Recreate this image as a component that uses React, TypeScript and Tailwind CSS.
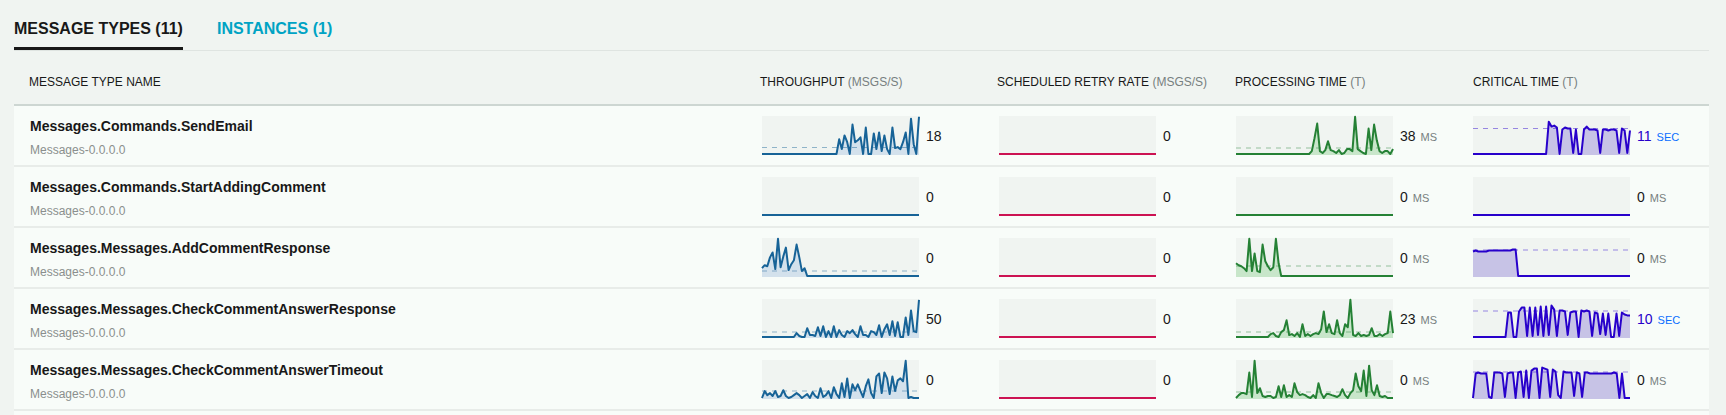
const flat = (n: number) => Array.from({ length: n }, () => 0)

interface Metric {
  data: number[]
  avg?: number
  value: string
  unit?: string
  sec?: boolean
}

interface Row {
  name: string
  throughput: Metric
  processing: Metric
  critical: Metric
}

const rows: Row[] = [
  {
    name: 'Messages.Commands.SendEmail',
    throughput: {
      value: '18',
      avg: 6.5,
      data: [...flat(28), 0, 15, 5, 19, 12, 0, 30, 12, 14, 17, 0, 27, 0, 0, 21, 5, 22, 3, 19, 5, 0, 27, 6, 7, 5, 12, 22, 0, 36, 10, 0, 38],
    },
    processing: {
      value: '38',
      unit: 'MS',
      avg: 6,
      data: [...flat(28), 3, 16, 31, 3, 1, 4, 13, 4, 3, 1, 4, 0, 1, 5, 5, 3, 38, 5, 3, 1, 0, 26, 4, 30, 14, 3, 1, 3, 3, 0, 5],
    },
    critical: {
      value: '11',
      unit: 'SEC',
      sec: true,
      avg: 25.5,
      data: [...flat(28), 33, 28, 29, 27, 0, 25, 27, 26, 26, 1, 25, 0, 0, 25, 28, 25, 25, 25, 24, 1, 25, 25, 24, 25, 25, 24, 1, 26, 24, 1, 24],
    },
  },
  {
    name: 'Messages.Commands.StartAddingComment',
    throughput: { value: '0', data: flat(2) },
    processing: { value: '0', unit: 'MS', data: flat(2) },
    critical: { value: '0', unit: 'MS', data: flat(2) },
  },
  {
    name: 'Messages.Messages.AddCommentResponse',
    throughput: {
      value: '0',
      avg: 5,
      data: [8, 11, 10, 19, 24, 7, 38, 9, 20, 29, 6, 12, 16, 32, 19, 5, 8, 0, ...flat(42)],
    },
    processing: {
      value: '0',
      unit: 'MS',
      avg: 10,
      data: [13, 11, 10, 8, 5, 38, 5, 23, 5, 4, 32, 15, 10, 6, 9, 38, 13, 0, ...flat(42)],
    },
    critical: {
      value: '0',
      unit: 'MS',
      avg: 26,
      data: [25, 26, 25, 25, 25, 25, 26, 26, 26, 26, 26, 26, 26, 26, 26, 27, 27, 0, ...flat(42)],
    },
  },
  {
    name: 'Messages.Messages.CheckCommentAnswerResponse',
    throughput: {
      value: '50',
      avg: 5,
      data: [...flat(13), 4, 1, 0, 0, 9, 2, 2, 1, 10, 1, 11, 0, 6, 0, 11, 0, 7, 2, 0, 6, 4, 7, 3, 0, 11, 2, 2, 0, 6, 5, 2, 12, 0, 8, 13, 2, 16, 1, 15, 0, 0, 20, 2, 27, 6, 5, 38],
    },
    processing: {
      value: '23',
      unit: 'MS',
      avg: 5,
      data: [...flat(13), 3, 4, 1, 0, 5, 7, 17, 2, 3, 1, 4, 0, 13, 1, 3, 1, 3, 4, 3, 8, 26, 5, 13, 4, 3, 17, 4, 1, 13, 10, 38, 2, 1, 4, 1, 2, 1, 2, 9, 1, 1, 3, 1, 3, 4, 26, 4],
    },
    critical: {
      value: '10',
      unit: 'SEC',
      sec: true,
      avg: 26,
      data: [...flat(13), 25, 25, 0, 0, 26, 30, 30, 1, 30, 1, 30, 2, 31, 1, 31, 2, 32, 28, 1, 27, 27, 26, 2, 25, 26, 26, 0, 27, 26, 27, 26, 1, 25, 24, 3, 24, 2, 24, 0, 0, 24, 1, 25, 23, 22, 22],
    },
  },
  {
    name: 'Messages.Messages.CheckCommentAnswerTimeout',
    throughput: {
      value: '0',
      avg: 7,
      data: [0, 7, 3, 5, 2, 7, 1, 2, 8, 2, 0, 1, 3, 5, 3, 0, 2, 4, 0, 6, 2, 0, 10, 1, 3, 7, 0, 11, 4, 0, 15, 1, 20, 0, 14, 8, 14, 7, 1, 12, 19, 5, 0, 22, 25, 5, 26, 20, 4, 22, 7, 18, 20, 17, 38, 0, 1, 0, 0, 0],
    },
    processing: {
      value: '0',
      unit: 'MS',
      avg: 6,
      data: [0, 3, 5, 5, 4, 26, 1, 38, 5, 10, 2, 1, 2, 2, 0, 1, 12, 1, 13, 1, 3, 1, 15, 6, 3, 4, 3, 1, 0, 3, 0, 15, 5, 0, 4, 4, 3, 2, 1, 3, 9, 3, 0, 5, 8, 25, 12, 7, 28, 2, 33, 8, 3, 13, 2, 1, 2, 0, 0, 0],
    },
    critical: {
      value: '0',
      unit: 'MS',
      avg: 26,
      data: [0, 25, 26, 25, 25, 25, 1, 0, 26, 26, 26, 25, 1, 25, 26, 26, 0, 26, 27, 1, 28, 0, 28, 30, 30, 0, 31, 30, 29, 1, 29, 27, 3, 0, 27, 26, 26, 26, 2, 26, 25, 1, 26, 26, 25, 25, 25, 25, 25, 25, 25, 25, 25, 26, 25, 0, 25, 0, 0, 0],
    },
  },
]

// width and height of the plot, same for all four columns
const W = 157
const H = 39

const chartColors = {
  throughput: { line: '#176397', area: '#d3e1ec' },
  retry: { line: '#cc1252', area: '#f5d0dc' },
  processing: { line: '#258135', area: '#c8e6ca' },
  critical: { line: '#2700cb', area: '#c7c3e6' },
}

type ChartColor = { line: string; area: string }

function Sparkline({ data, color, avg }: { data: number[]; color: ChartColor; avg?: number }) {
  const pts = data.map((h, i) => `${((i * W) / (data.length - 1)).toFixed(1)},${(38 - h * 0.98).toFixed(1)}`)
  return (
    <svg width={W} height={H} className="block shrink-0 overflow-visible bg-[#f0f4f1]">
      {avg !== undefined && <polygon points={`0,${H} ${pts.join(' ')} ${W},${H}`} fill={color.area} />}
      {avg !== undefined && (
        <line x1={0} x2={W} y1={38 - avg} y2={38 - avg} stroke={color.line} strokeOpacity={0.45} strokeWidth={1} strokeDasharray="5 5" />
      )}
      <polyline points={pts.join(' ')} fill="none" stroke={color.line} strokeWidth={2} strokeLinejoin="round" />
    </svg>
  )
}

function MetricCell({ metric, color }: { metric: Metric; color: ChartColor }) {
  return (
    <div className="flex w-[237px] shrink-0 items-center pl-[2px]">
      <Sparkline data={metric.data} color={color} avg={metric.avg} />
      <span className={`ml-[7px] mt-[1px] text-[14px] ${metric.sec ? 'text-[#2700cb]' : 'text-[#181818]'}`}>{metric.value}</span>
      {metric.unit && (
        <span className={`ml-[5px] mt-[3px] text-[11px] ${metric.sec ? 'text-[#0b6eff]' : 'text-[#777f7f]'}`}>{metric.unit}</span>
      )}
    </div>
  )
}

function HeaderCell({ label, hint, className = '' }: { label: string; hint: string; className?: string }) {
  return (
    <div className={`w-[237px] shrink-0 whitespace-nowrap ${className}`}>
      {label} <span className="text-[#777f7f]">{hint}</span>
    </div>
  )
}

export default function App() {
  return (
    <div className="h-[415px] w-[1726px] overflow-hidden bg-[#f0f4f1] pl-[14px] pr-[17px] font-['Liberation_Sans',Arial,sans-serif] text-[#181818]">
      <div className="flex h-[51px] items-start border-b-[1px] border-[#dfe4e1]">
        <div className="flex h-[50px] items-center border-b-[3px] border-[#181818] pt-[10px] text-[16px] font-bold">MESSAGE TYPES (11)</div>
        <div className="ml-[34px] flex h-[50px] items-center pt-[7px] text-[16px] font-bold text-[#00a3c4]">INSTANCES (1)</div>
      </div>

      <div className="flex h-[55px] items-center border-b-[2px] border-[#cdd6d2] pt-[8px] text-[12px]">
        <div className="flex-1 pl-[15px]">MESSAGE TYPE NAME</div>
        <HeaderCell label="THROUGHPUT" hint="(MSGS/S)" />
        <HeaderCell label="SCHEDULED RETRY RATE" hint="(MSGS/S)" />
        <HeaderCell label="PROCESSING TIME" hint="(T)" className="pl-[1px]" />
        <HeaderCell label="CRITICAL TIME" hint="(T)" className="pl-[2px]" />
        <div className="w-[1px] shrink-0" />
      </div>

      {rows.map((row) => (
        <div key={row.name} className="flex h-[61px] border-b-[2px] border-[#e8ece9] bg-[#f8fcf9]">
          <div className="flex-1 pl-[16px]">
            <div className="mt-[10px] text-[14px] font-bold leading-[20px]">{row.name}</div>
            <div className="mt-[6px] text-[12px] leading-[16px] text-[#8a8f8d]">Messages-0.0.0.0</div>
          </div>
          <MetricCell metric={row.throughput} color={chartColors.throughput} />
          <MetricCell metric={{ value: '0', data: flat(2) }} color={chartColors.retry} />
          <MetricCell metric={row.processing} color={chartColors.processing} />
          <MetricCell metric={row.critical} color={chartColors.critical} />
          <div className="w-[1px] shrink-0" />
        </div>
      ))}
      <div className="h-[10px] bg-[#f8fcf9]" />
    </div>
  )
}
